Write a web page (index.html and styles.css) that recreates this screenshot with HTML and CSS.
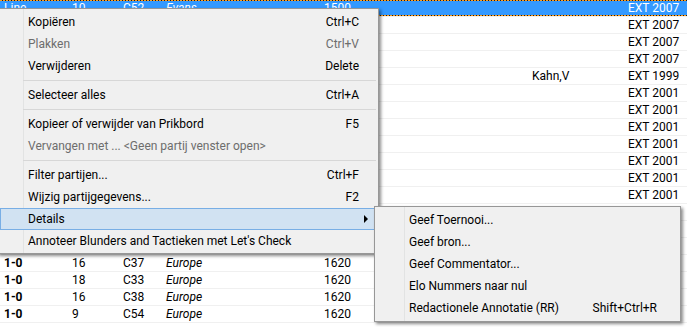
FILE: index.html
```html
<!DOCTYPE html>
<html lang="nl">
<head>
  <meta charset="UTF-8" />
  <title>Partijen</title>
  <link rel="stylesheet" href="styles.css">
</head>
<body>

  <div class="list">
    <div class="row sel"><span>Line</span><span>10</span><span>C52</span><span class="ev">Evans</span><span>1500</span><span></span><span>EXT 2007</span></div>
    <div class="row"><span></span><span></span><span></span><span></span><span></span><span></span><span>EXT 2007</span></div>
    <div class="row"><span></span><span></span><span></span><span></span><span></span><span></span><span>EXT 2007</span></div>
    <div class="row"><span></span><span></span><span></span><span></span><span></span><span></span><span>EXT 2007</span></div>
    <div class="row"><span></span><span></span><span></span><span></span><span></span><span>Kahn,V</span><span>EXT 1999</span></div>
    <div class="row"><span></span><span></span><span></span><span></span><span></span><span></span><span>EXT 2001</span></div>
    <div class="row"><span></span><span></span><span></span><span></span><span></span><span></span><span>EXT 2001</span></div>
    <div class="row"><span></span><span></span><span></span><span></span><span></span><span></span><span>EXT 2001</span></div>
    <div class="row"><span></span><span></span><span></span><span></span><span></span><span></span><span>EXT 2001</span></div>
    <div class="row"><span></span><span></span><span></span><span></span><span></span><span></span><span>EXT 2001</span></div>
    <div class="row"><span></span><span></span><span></span><span></span><span></span><span></span><span>EXT 2001</span></div>
    <div class="row"><span></span><span></span><span></span><span></span><span></span><span></span><span>EXT 2001</span></div>
    <div class="row"></div>
    <div class="row"></div>
    <div class="row"></div>
    <div class="row"><span class="res">1-0</span><span>16</span><span>C37</span><span class="ev">Europe</span><span>1620</span></div>
    <div class="row"><span class="res">1-0</span><span>18</span><span>C33</span><span class="ev">Europe</span><span>1620</span></div>
    <div class="row"><span class="res">1-0</span><span>16</span><span>C38</span><span class="ev">Europe</span><span>1620</span></div>
    <div class="row"><span class="res">1-0</span><span>9</span><span>C54</span><span class="ev">Europe</span><span>1620</span></div>
    <div class="row"></div>
  </div>

  <!-- context menu -->
  <div class="menu main-menu">
    <div class="item"><span>Kopiëren</span><span class="key">Ctrl+C</span></div>
    <div class="item off"><span>Plakken</span><span class="key">Ctrl+V</span></div>
    <div class="item"><span>Verwijderen</span><span class="key">Delete</span></div>
    <div class="sep"></div>
    <div class="item"><span>Selecteer alles</span><span class="key">Ctrl+A</span></div>
    <div class="sep"></div>
    <div class="item"><span>Kopieer of verwijder van Prikbord</span><span class="key">F5</span></div>
    <div class="item off"><span>Vervangen met ... &lt;Geen partij venster open&gt;</span></div>
    <div class="sep"></div>
    <div class="item"><span>Filter partijen...</span><span class="key">Ctrl+F</span></div>
    <div class="item"><span>Wijzig partijgegevens...</span><span class="key">F2</span></div>
    <div class="item hot"><span>Details</span><span class="arrow"></span></div>
    <div class="item"><span>Annoteer Blunders and Tactieken met Let's Check</span></div>
  </div>

  <!-- submenu of Details -->
  <div class="menu sub-menu">
    <div class="item"><span>Geef Toernooi...</span></div>
    <div class="item"><span>Geef bron...</span></div>
    <div class="item"><span>Geef Commentator...</span></div>
    <div class="item"><span>Elo Nummers naar nul</span></div>
    <div class="item"><span>Redactionele Annotatie (RR)</span><span class="key">Shift+Ctrl+R</span></div>
  </div>

</body>
</html>
```

FILE: styles.css
```css
body {
  margin: 0;
  width: 687px;
  height: 327px;
  overflow: hidden;
  background: white;
  font-family: Roboto, "Liberation Sans", sans-serif;
  font-size: 12px;
  color: black;
  position: relative;
}

/* game list */
.row {
  display: grid;
  grid-template-columns: 68px 51px 43px 158px 208px 96px 1fr;
  align-items: center;
  box-sizing: border-box;
  height: 17px;
  padding-left: 4px;
  border-bottom: 1px solid #f0f0f0;
  white-space: nowrap;
}

.row.sel {
  color: white;
  background:
    repeating-linear-gradient(90deg, #ff9c1a 0 2px, #1c1c1c 2px 3px) top / 100% 1px no-repeat,
    repeating-linear-gradient(90deg, #ff9c1a 0 2px, #1c1c1c 2px 3px) bottom / 100% 1px no-repeat,
    #3399ff;
}

.res { font-weight: bold; }
.ev { font-style: italic; }

/* menus */
.menu {
  position: absolute;
  box-sizing: border-box;
  border: 1px solid #979797;
  padding: 2px;
  box-shadow: 2px 2px 3px rgba(0, 0, 0, 0.45);
  white-space: nowrap;
}

.main-menu {
  left: -3px;
  top: 8px;
  width: 382px;
  padding-bottom: 1px;
  background: linear-gradient(90deg, transparent 25px, #e2e3e3 25px 26px, transparent 26px), #f0f0f0;
}

.sub-menu {
  left: 374px;
  top: 206px;
  width: 307px;
  background: linear-gradient(90deg, transparent 29px, #e2e3e3 29px 30px, transparent 30px), #f0f0f0;
}

.item {
  display: flex;
  align-items: center;
  height: 22px;
  padding: 0 17px 0 28px;
}

.sub-menu .item { padding: 0 21px 0 32px; }

.item.off { color: #6d6d6d; }

.item.hot {
  background: #d1e2f2;
  box-shadow: inset 0 0 0 1px #78aee5;
}

.key { margin-left: auto; }

.arrow {
  margin-left: auto;
  margin-right: -9px;
  width: 0;
  height: 0;
  border-left: 4px solid black;
  border-top: 4px solid transparent;
  border-bottom: 4px solid transparent;
}

.sep {
  height: 7px;
  margin-left: 23px;
  background: linear-gradient(#d7d7d7, #d7d7d7) 0 3px / 100% 1px no-repeat;
}
```
